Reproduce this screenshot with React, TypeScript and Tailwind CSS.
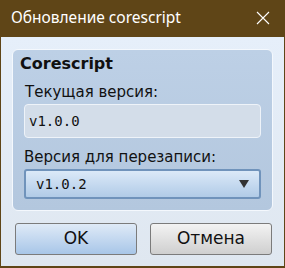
export default function App() {
  return (
    <div className="w-[285px] h-[268px] flex flex-col bg-[#5f4517] px-px pb-[2px]">
      <div className="h-[37px] shrink-0 flex items-center justify-between pl-[10px] pr-[14px] text-white">
        <span className="text-[15.5px] font-['Noto_Sans',sans-serif] leading-none pb-[2px]">Обновление corescript</span>
        <svg width="14" height="14" viewBox="0 0 14 14" className="mb-[1px]">
          <path d="M1 1 L13 13 M13 1 L1 13" stroke="#fff" strokeWidth="1.1" />
        </svg>
      </div>
      <div className="flex-1 flex flex-col bg-gradient-to-b from-[#e6effa] to-[#dfe7f0] px-[11px] pt-[12px] font-['DejaVu_Sans',sans-serif] text-[#111]">
        <div className="h-[162px] rounded-[6px] border border-[#f4f8fd] bg-gradient-to-b from-[#bdd0e6] to-[#b3c7de] px-[11px] pt-[4px]">
          <div className="text-[16px] font-bold leading-[20px] -ml-[4px]">Corescript</div>
          <div className="text-[15px] leading-[18px] mt-[9px] ml-px">Текущая версия:</div>
          <div className="mt-[3px] h-[34px] rounded-[4px] border border-[#eef3f9] bg-[#d3dde9] flex items-center pl-[4px] font-['DejaVu_Sans_Mono',monospace] text-[14px]">
            v1.0.0
          </div>
          <div className="text-[15px] leading-[18px] mt-[10px]">Версия для перезаписи:</div>
          <div className="mt-[3px] h-[30px] rounded-[3px] border-2 border-[#7093bb] bg-gradient-to-b from-[#dbe9f8] to-[#b1cbe7] flex items-center justify-between pl-[10px] pr-[10px] font-['DejaVu_Sans_Mono',monospace] text-[14px]">
            <span>v1.0.2</span>
            <svg width="10" height="8" viewBox="0 0 10 8">
              <path d="M0 0 L10 0 L5 8 Z" fill="#333" />
            </svg>
          </div>
        </div>
        <div className="flex gap-[13px] mt-[12px] pl-[3px] pr-[1px]">
          <button className="w-[122px] h-[32px] rounded-[3px] border border-[#7b7b7b] bg-gradient-to-b from-[#dfeaf7] to-[#a8c6e8] text-[17px] text-[#111]">
            OK
          </button>
          <button className="w-[122px] h-[32px] rounded-[3px] border border-[#7b7b7b] bg-gradient-to-b from-[#f3f3f3] to-[#cfcfcf] text-[17px] text-[#111]">
            Отмена
          </button>
        </div>
      </div>
    </div>
  );
}
